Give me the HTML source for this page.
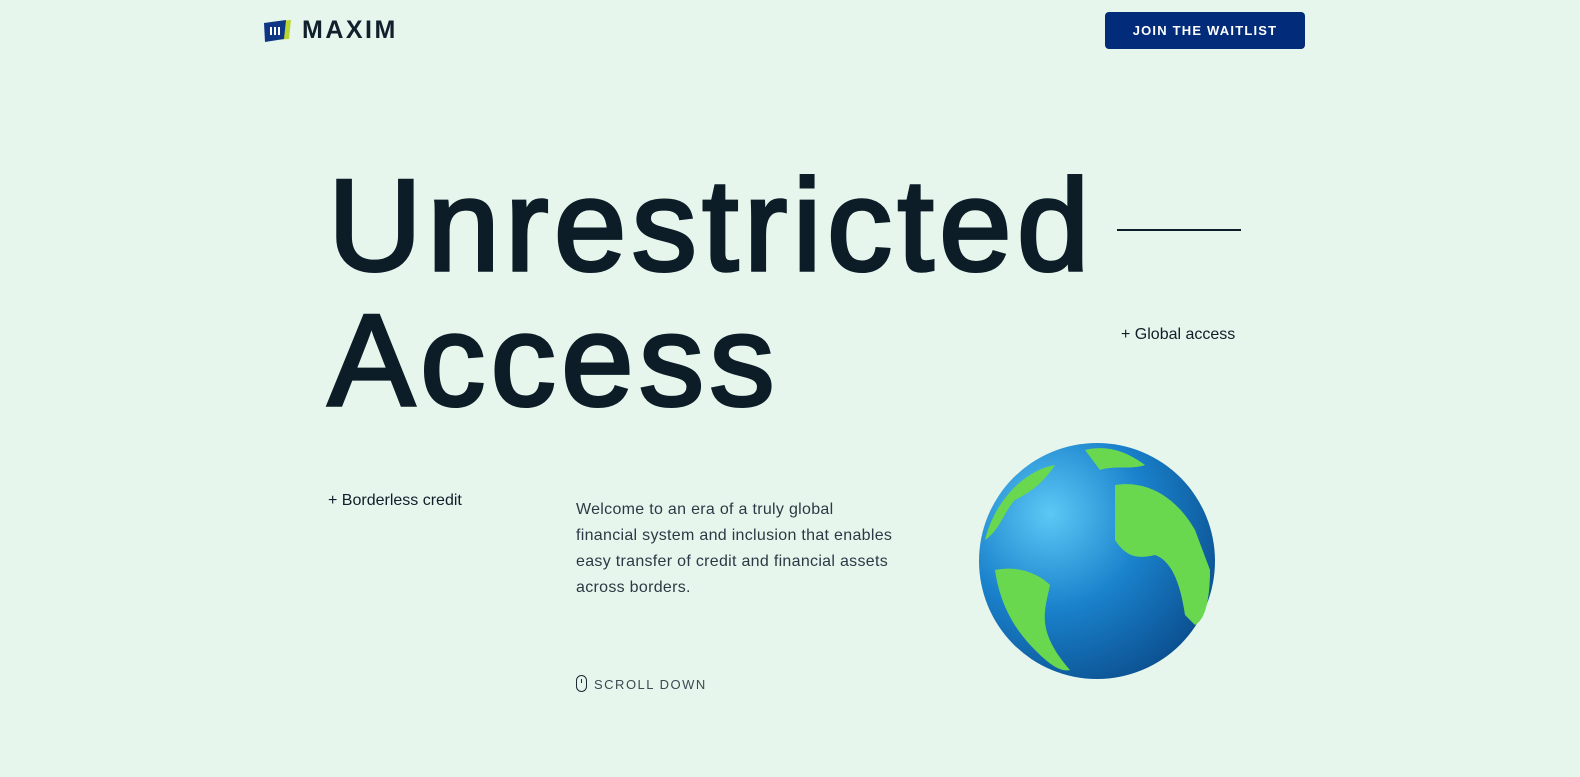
<!DOCTYPE html>
<html><head><style>
body{margin:0;width:1580px;height:777px;background:#e7f6ed;font-family:"Liberation Sans",sans-serif;color:#0f1f29;position:relative;overflow:hidden}
.abs{position:absolute}
h1{margin:0;font-weight:normal;font-size:130px;letter-spacing:5.5px;line-height:135px;color:#0d1d27;white-space:nowrap;-webkit-text-stroke:3.5px #0d1d27}
.btn{left:1105px;top:12px;width:200px;height:37px;background:#022b7a;border-radius:4px;color:#fff;font-weight:bold;font-size:13px;letter-spacing:1.2px;text-align:center;line-height:37px}
</style></head><body>
<svg class="abs" style="left:264px;top:19px" width="28" height="24" viewBox="0 0 28 24">
<polygon points="6,3 27,1 25,20 8,21" fill="#b9d531"/>
<polygon points="0,4 22,1 20,20 1,23" fill="#0f3585"/>
<rect x="6" y="8" width="2" height="8" fill="#fff"/><rect x="10" y="8" width="2" height="8" fill="#fff"/><rect x="14" y="8" width="2" height="8" fill="#fff"/>
</svg>
<div class="abs" style="left:302px;top:16px;font-size:25px;font-weight:bold;letter-spacing:2.5px;color:#10202c">MAXIM</div>
<div class="abs btn">JOIN THE WAITLIST</div>
<h1 class="abs" style="left:328px;top:158px">Unrestricted<br>Access</h1>
<div class="abs" style="left:1117px;top:229px;width:124px;height:2px;background:#0d1d27"></div>
<div class="abs" style="left:1121px;top:326px;font-size:16px">+ Global access</div>
<div class="abs" style="left:328px;top:492px;font-size:16px">+ Borderless credit</div>
<div class="abs" style="left:576px;top:497px;width:320px;font-size:16px;letter-spacing:0.3px;line-height:26px;color:#2a3a44">Welcome to an era of a truly global financial system and inclusion that enables easy transfer of credit and financial assets across borders.</div>
<div class="abs" style="left:576px;top:675px;width:11px;height:17px;border:1.5px solid #1b2a33;border-radius:6px;box-sizing:border-box"></div>
<div class="abs" style="left:580.5px;top:679px;width:1.5px;height:4px;background:#1b2a33"></div>
<div class="abs" style="left:594px;top:677px;font-size:13px;letter-spacing:1.5px;color:#3a4a52">SCROLL DOWN</div>
<svg class="abs" style="left:975px;top:440px" width="245" height="245" viewBox="0 0 245 245">
<defs><radialGradient id="g" cx="0.3" cy="0.3" r="0.8"><stop offset="0" stop-color="#5cc8f5"/><stop offset="0.5" stop-color="#1a82cc"/><stop offset="1" stop-color="#0b4f8f"/></radialGradient></defs>
<circle cx="122" cy="121" r="118" fill="url(#g)"/>
<path d="M140 45 C170 40 200 55 220 90 L235 130 C235 160 230 180 220 185 L210 175 C205 140 195 120 180 115 C160 120 150 115 140 100 Z" fill="#6ad84f"/>
<path d="M20 130 C45 125 65 135 75 145 C70 170 60 190 95 230 C85 232 75 225 60 210 C40 190 25 165 20 130Z" fill="#6ad84f"/>
<path d="M10 100 C20 60 50 30 80 25 C70 40 60 50 40 60 C30 70 25 90 10 100Z" fill="#6ad84f"/>
<path d="M110 10 C130 5 150 10 170 25 C155 30 140 25 125 30 Z" fill="#6ad84f"/>
</svg>
</body></html>
